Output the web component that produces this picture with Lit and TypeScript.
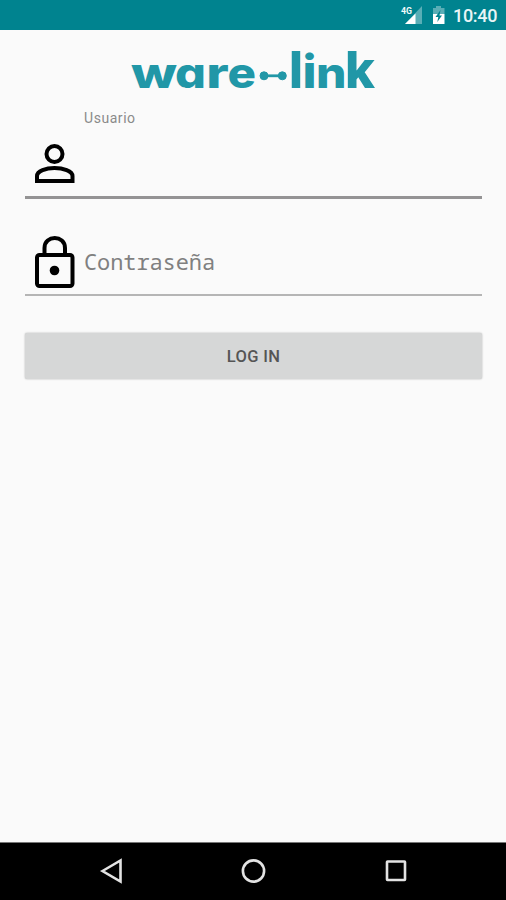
import { LitElement, html, css, svg } from "lit";
import { customElement } from "lit/decorators.js";

interface Glyph { ch: string; x: number; w: number; stretch?: number; }

const LETTERS: Glyph[] = [
  { ch: "w", x: 0, w: 46 },
  { ch: "a", x: 44, w: 31 },
  { ch: "r", x: 75.3, w: 22.5 },
  { ch: "e", x: 96.5, w: 28.5 },
  { ch: "l", x: 158, w: 14, stretch: 1.2 },
  { ch: "i", x: 171.5, w: 14, stretch: 1.1 },
  { ch: "n", x: 185, w: 30.5 },
  { ch: "k", x: 214, w: 30, stretch: 1.2 },
];

@customElement("brand-logo")
export class BrandLogo extends LitElement {
  static styles = css`
    :host { display: block; width: 250px; height: 48px; }
    svg { display: block; overflow: visible; }
    text { font: 800 42px Inter, sans-serif; font-feature-settings: "cv11" 1, "ss03" 1; fill: #2197a7; }
    .link { fill: #2197a7; stroke: #2197a7; }
  `;
  render() {
    return html`<svg width="250" height="48" viewBox="0 0 250 48">
      ${LETTERS.map(l => svg`<text transform="translate(${l.x} 42) scale(1 ${l.stretch ?? 1})" textLength=${l.w} lengthAdjust="spacingAndGlyphs">${l.ch}</text>`)}
      <g class="link"><path d="M133 29.8H151.3" stroke-width="2.8"/><circle cx="133" cy="29.8" r="4"/><circle cx="151.3" cy="29.8" r="4"/></g>
    </svg>`;
  }
}

@customElement("status-bar")
export class StatusBar extends LitElement {
  static styles = css`
    :host { display: flex; height: 30px; box-sizing: border-box; background: #00838f; justify-content: flex-end; padding-right: 9px; color: #e8f5f6; }
    svg { display: block; }
    .net { font: 700 9.5px Roboto, sans-serif; fill: #f2fafa; }
    .time { font: 500 18px/32px Roboto, sans-serif; letter-spacing: -.3px; margin-left: 7px; width: 44px; white-space: nowrap; }
  `;
  render() {
    return html`<svg width="46" height="30" viewBox="0 0 46 30">
        <path d="M22 6V24H5Z" fill="#fff" opacity=".35"/><path d="M15.5 13.5V24H5Z" fill="#fff"/>
        <text class="net" x="1" y="14" textLength="11" lengthAdjust="spacingAndGlyphs">4G</text>
        <path d="M33 8H36V6H41V8H44.5V14H33Z" fill="#fff" opacity=".35"/>
        <path d="M33 14H44.5V24H33Z" fill="#fff"/>
        <path d="M40.5 10L35.5 17H38.3L37.3 22L42 15.5H39.5Z" fill="#00838f"/>
      </svg><span class="time">10:40</span>`;
  }
}

@customElement("app-root")
export class AppRoot extends LitElement {
  static styles = css`
    :host { display: flex; flex-direction: column; height: 900px; background: #fafafa; font-family: Roboto, sans-serif; overflow: hidden; }
    main { flex: 1; display: flex; flex-direction: column; padding: 16px 24px 0 25px; }
    brand-logo { margin-left: 106px; }
    .label { margin: 15px 0 0 59px; font-size: 14px; line-height: 18px; letter-spacing: .55px; color: #8a8a8a; }
    .field { display: flex; align-items: center; padding-left: 10px; box-sizing: border-box; }
    .user { height: 72px; border-bottom: 3px solid #949394; }
    .pass { height: 97px; border-bottom: 2px solid #b5b5b5; }
    .field svg { flex: none; display: block; }
    .user svg { margin-top: 5px; }
    .pass svg { margin-top: 30px; }
    .hint { margin: 28px 0 0 9px; font: 22px/30px "Noto Sans Mono", "DejaVu Sans Mono", monospace; letter-spacing: -.1px; color: #808080; }
    button { margin-top: 37px; height: 46px; border: 0; border-radius: 2px; background: #d6d7d7; box-shadow: 0 0 2px #aaa; color: #555; font: 500 16.5px Roboto, sans-serif; letter-spacing: .35px; padding: 0; }
    nav { height: 58px; background: #000; display: grid; grid-template-columns: 182px 142px 182px; border-top: 1px solid #777; box-sizing: border-box; }
    nav svg { display: block; width: 100%; height: 57px; fill: none; stroke: #e3e3e3; stroke-width: 2.6; }
  `;
  render() {
    return html`
      <status-bar></status-bar>
      <main>
        <brand-logo></brand-logo>
        <div class="label">Usuario</div>
        <div class="field user">
          <svg width="40" height="40" viewBox="0 0 40 40" fill="none" stroke="#000" stroke-width="4"><circle cx="19.5" cy="10" r="8"/><path d="M2 37V32C2 27 11 24 19.5 24S37.5 27 37.5 32V37Z"/></svg>
        </div>
        <div class="field pass">
          <svg width="40" height="52" viewBox="0 0 40 52" fill="none" stroke="#000" stroke-width="4"><rect x="2" y="19" width="35.5" height="31" rx="2.5"/><path d="M9.5 19V12C9.5 -1.3 30 -1.3 30 12V19"/><circle cx="19.5" cy="34.5" r="4.8" fill="#000" stroke="none"/></svg>
          <span class="hint">Contraseña</span>
        </div>
        <button>LOG IN</button>
      </main>
      <nav>
        <svg viewBox="0 0 182 57"><path d="M102.5 28L120.5 17.5V38.5Z"/></svg>
        <svg viewBox="0 0 142 57"><circle cx="71.5" cy="28" r="10.6"/></svg>
        <svg viewBox="0 0 182 57"><rect x="63" y="18.5" width="18" height="18.5" rx=".5"/></svg>
      </nav>`;
  }
}
